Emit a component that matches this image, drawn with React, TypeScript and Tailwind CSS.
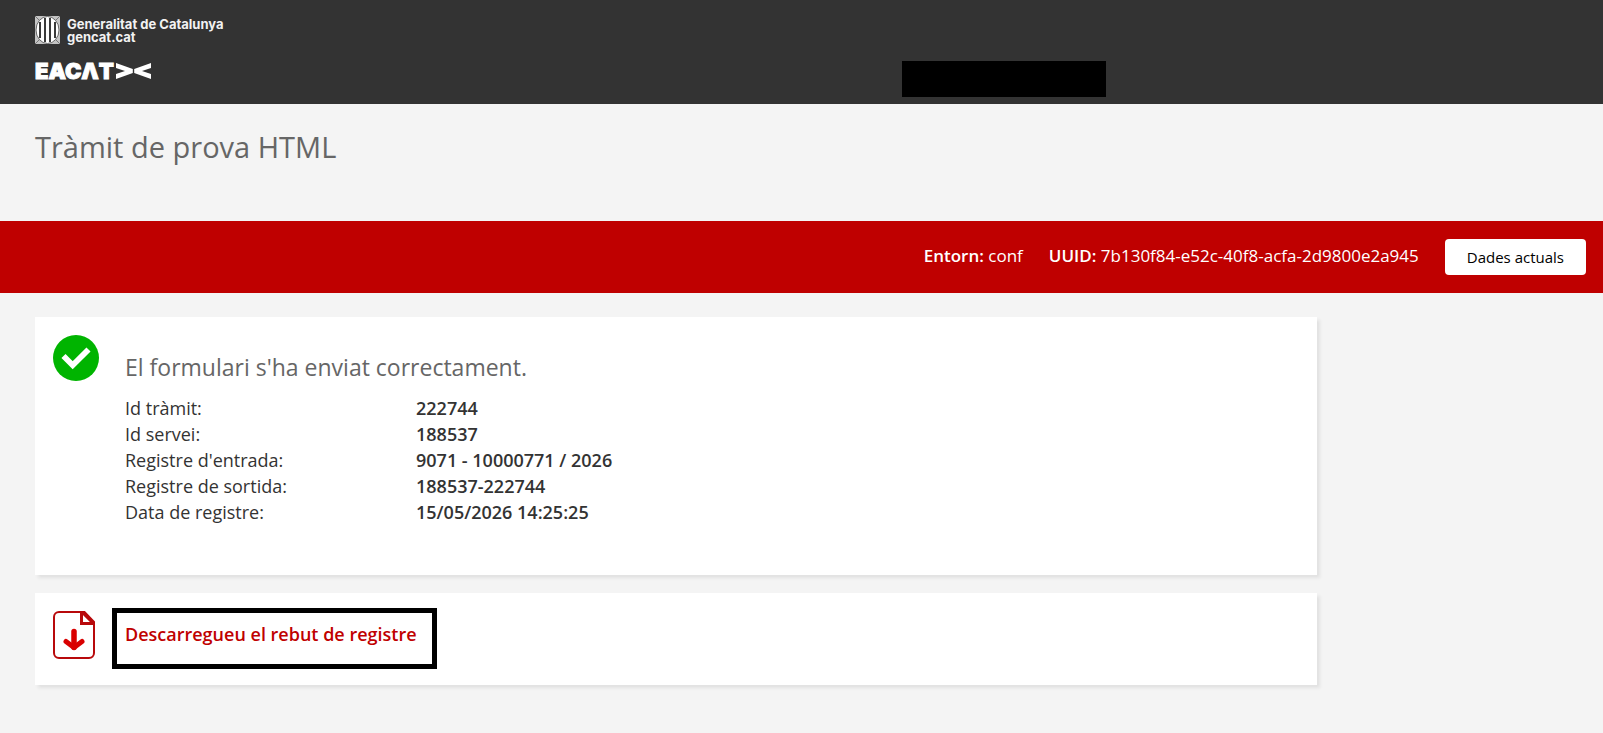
import React from 'react'

const details = [
  { label: 'Id tràmit:', value: '222744' },
  { label: 'Id servei:', value: '188537' },
  { label: "Registre d'entrada:", value: '9071 - 10000771 / 2026' },
  { label: 'Registre de sortida:', value: '188537-222744' },
  { label: 'Data de registre:', value: '15/05/2026 14:25:25' },
]

function Shield() {
  return (
    <svg width="25" height="28" viewBox="0 0 25 28" aria-hidden="true">
      <rect width="25" height="28" fill="#c4c4c4" />
      <path d="M0 0l5 5M25 0l-5 5M0 28l5-5M25 28l-5-5" stroke="#777" strokeWidth="1" />
      <ellipse cx="12.5" cy="14" rx="11.5" ry="13.5" fill="#fff" stroke="#666" strokeWidth="1" />
      <path d="M5 6v16M10 2v24M15 2v24M20 6v16" stroke="#3a3a3a" strokeWidth="2" />
    </svg>
  )
}

function Header() {
  return (
    <header className="flex h-[104px] items-start justify-between bg-[#333] text-white">
      <div className="pt-4 pl-[35px]">
        <a href="#gencat" className="flex gap-[7px]">
          <Shield />
          <span className="pt-[2px] font-['Inter',sans-serif] text-[13px] leading-[13px] font-bold text-[#f2f2f2]">
            Generalitat de Catalunya
            <br />
            gencat.cat
          </span>
        </a>
        <a href="#eacat" className="mt-[15px] flex items-center gap-[2px]">
          <span className="font-['Inter',sans-serif] text-[22px] leading-6 font-black [-webkit-text-stroke:1px_#fff]">
            EACΛT
          </span>
          <svg width="35" height="16" viewBox="0 0 35 16" fill="#fff" aria-hidden="true">
            <path d="M0 0L16.800 6v4L0 16v-5L9 8L0 5z" />
            <path d="M35 0L18.200 6v4L35 16v-5L26 8L35 5z" />
          </svg>
        </a>
      </div>
      <div className="mt-[61px] mr-[31%] h-9 w-[204px] bg-black" />
    </header>
  )
}

// Barra amb les dades de l'entorn
function EnvBar() {
  return (
    <div className="flex h-[72px] items-center justify-end gap-[26px] bg-[#bf0000] pr-[17px] text-[17px] leading-6 text-white">
      <p className="pb-[2px]">
        <b className="font-semibold">Entorn:</b> conf
      </p>
      <p className="pb-[2px]">
        <b className="font-semibold">UUID:</b> 7b130f84-e52c-40f8-acfa-2d9800e2a945
      </p>
      <button type="button" className="h-9 rounded bg-white px-[22px] text-[15px] text-black">
        Dades actuals
      </button>
    </div>
  )
}

function CheckIcon() {
  return (
    <svg width="46" height="46" viewBox="0 0 46 46" className="shrink-0" aria-hidden="true">
      <circle cx="23" cy="23" r="23" fill="#00b400" />
      <path d="M10.500 21L19.700 30.200L35.500 14.500" fill="none" stroke="#fff" strokeWidth="5.8" />
    </svg>
  )
}

function DownloadIcon() {
  return (
    <svg width="42" height="48" viewBox="0 0 42 48" fill="none" className="shrink-0" aria-hidden="true">
      <path
        d="M6 1h25.5L41 11v31a5 5 0 0 1-5 5H6a5 5 0 0 1-5-5V6a5 5 0 0 1 5-5z"
        stroke="#b8090b"
        strokeWidth="2"
      />
      <path d="M28.5 2v10.5H40.5L30 2z" fill="#fff" stroke="#b8090b" strokeWidth="3" />
      <path d="M21 20.500v16" stroke="#d90000" strokeWidth="5.500" strokeLinecap="round" />
      <path d="M13 30.500l8 6 8-6" stroke="#d90000" strokeWidth="5" strokeLinecap="round" strokeLinejoin="round" />
    </svg>
  )
}

export default function App() {
  return (
    <div className="min-h-screen bg-[#f4f4f4] font-['Open_Sans',sans-serif] text-[#333]">
      <Header />
      <h1 className="px-[35px] pt-[23px] pb-[54px] text-[29px] leading-10 text-[#666]">Tràmit de prova HTML</h1>
      <EnvBar />

      <main className="ml-[35px] flex w-4/5 flex-col gap-[18px] pt-6 pb-12">
        <section className="flex gap-[26px] bg-white px-[18px] pt-[18px] pb-[50px] shadow-[3px_3px_3px_#e2e2e2]">
          <CheckIcon />
          <div className="pt-4">
            <h2 className="text-[23px] leading-8 text-[#666]">El formulari s'ha enviat correctament.</h2>
            <dl className="mt-3 text-lg leading-[26px]">
              {details.map((d) => (
                <div key={d.label} className="flex">
                  <dt className="w-[291px]">{d.label}</dt>
                  <dd className="font-semibold">{d.value}</dd>
                </div>
              ))}
            </dl>
          </div>
        </section>

        <section className="flex items-start gap-[17px] bg-white px-[18px] pt-[15px] pb-4 shadow-[3px_3px_3px_#e2e2e2]">
          <div className="pt-[3px]">
            <DownloadIcon />
          </div>
          <a
            href="#rebut"
            className="border-[5px] border-black pt-2 pr-[15px] pb-[17px] pl-2 text-lg leading-[26px] font-semibold text-[#c00000]"
          >
            Descarregueu el rebut de registre
          </a>
        </section>
      </main>
    </div>
  )
}
